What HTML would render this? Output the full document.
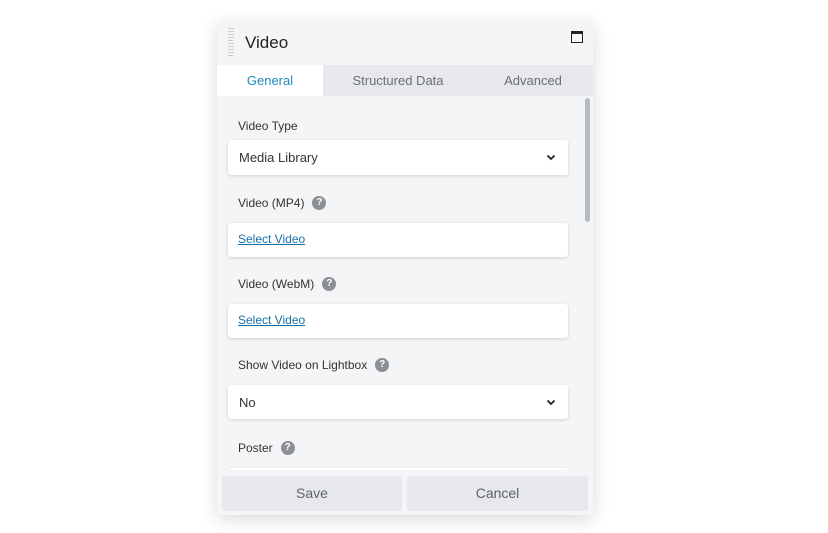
<!DOCTYPE html><html><head><style>
body{margin:0;width:828px;height:533px;background:#fff;font-family:"Liberation Sans",sans-serif;position:relative;overflow:hidden}
.p{position:absolute;left:217px;top:21px;width:376px;height:494px;background:#f4f5f7;border-radius:3px;box-shadow:0 4px 18px rgba(0,0,0,.15);overflow:hidden}
.a{position:absolute}
.lbl{position:absolute;left:21px;font-size:12px;color:#333;line-height:14px}
.box{position:absolute;left:11px;width:340px;background:#fff;border-radius:3px;box-shadow:0 1px 3px rgba(0,0,0,.15)}
.q{display:inline-block;width:14px;height:14px;border-radius:50%;background:#8c8f94;color:#fff;font-size:10px;font-weight:bold;text-align:center;line-height:14px;margin-left:8px;vertical-align:top}
.sel{font-size:13px;color:#333;padding:10px 11px}
.lnk{font-size:12px;color:#1a6fa8;text-decoration:underline;padding:9px 10px}
.chev{position:absolute;right:12px;top:12px}
.btn{position:absolute;top:455px;height:35px;background:#e6e8ec;border-radius:3px;font-size:14px;color:#5f636a;text-align:center;line-height:35px}
</style></head><body>
<div class="p">
<div class="a" style="left:11px;top:7px;width:6px;height:30px;background:repeating-linear-gradient(#ccc 0 1px,transparent 1px 3px)"></div>
<div class="a" style="left:28px;top:12px;font-size:17px;color:#222">Video</div>
<div class="a" style="left:354px;top:10px;width:10px;height:8px;border:1px solid #222;border-top-width:3px"></div>
<div class="a" style="left:0;top:44px;width:376px;height:31px;background:#e6e8ec"></div>
<div class="a" style="left:0;top:44px;width:106px;height:31px;background:#fff;color:#1e8cbe;font-size:13px;text-align:center;line-height:31px">General</div>
<div class="a" style="left:106px;top:44px;width:150px;height:31px;color:#6b6f76;font-size:13px;text-align:center;line-height:31px">Structured Data</div>
<div class="a" style="left:256px;top:44px;width:120px;height:31px;color:#6b6f76;font-size:13px;text-align:center;line-height:31px">Advanced</div>
<div class="a" style="left:368px;top:77px;width:5px;height:124px;background:#b8bcc2;border-radius:3px"></div>
<div class="lbl" style="top:98px">Video Type</div>
<div class="box" style="top:119px;height:35px"><div class="sel">Media Library</div><svg class="chev" width="10" height="10" viewBox="0 0 10 10"><path d="M1.5 3.5L5 7L8.5 3.5" stroke="#222" stroke-width="1.8" fill="none"/></svg></div>
<div class="lbl" style="top:175px">Video (MP4)<span class="q">?</span></div>
<div class="box" style="top:202px;height:34px"><div class="lnk">Select Video</div></div>
<div class="lbl" style="top:256px">Video (WebM)<span class="q">?</span></div>
<div class="box" style="top:283px;height:34px"><div class="lnk">Select Video</div></div>
<div class="lbl" style="top:337px">Show Video on Lightbox<span class="q">?</span></div>
<div class="box" style="top:364px;height:34px"><div class="sel">No</div><svg class="chev" width="10" height="10" viewBox="0 0 10 10"><path d="M1.5 3.5L5 7L8.5 3.5" stroke="#222" stroke-width="1.8" fill="none"/></svg></div>
<div class="lbl" style="top:420px">Poster<span class="q">?</span></div>
<div class="box" style="top:447px;height:30px"></div>
<div class="a" style="left:0;top:449px;width:376px;height:45px;background:#f4f5f7"></div>
<div class="btn" style="left:5px;width:180px">Save</div>
<div class="btn" style="left:190px;width:181px">Cancel</div>
</div>
</body></html>
